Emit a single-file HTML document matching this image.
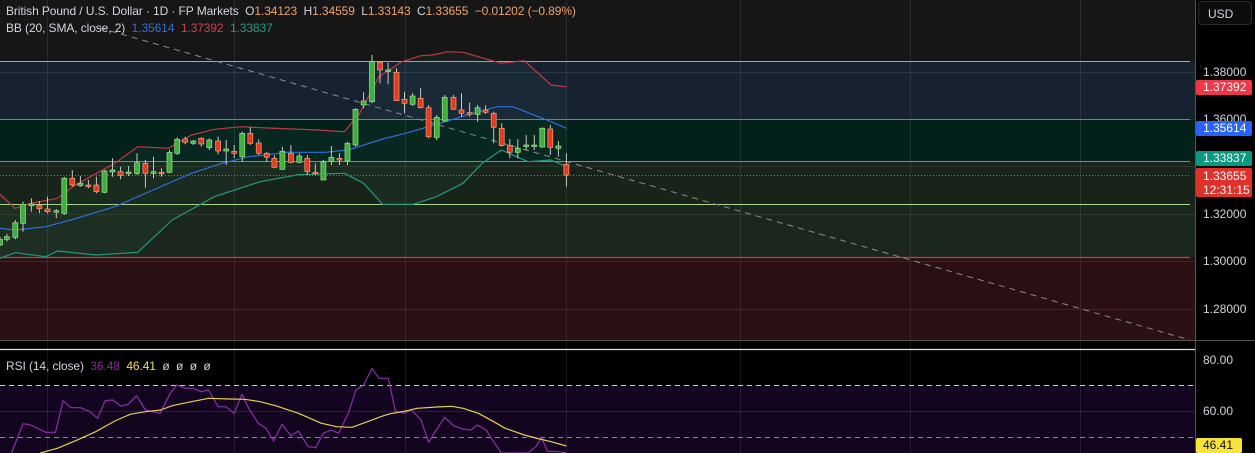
<!DOCTYPE html>
<html><head><meta charset="utf-8"><style>
html,body{margin:0;padding:0;background:#000;width:1255px;height:453px;overflow:hidden;font-family:"Liberation Sans",sans-serif;}
#wrap{position:relative;width:1255px;height:453px;}
svg{position:absolute;left:0;top:0;}
.t{position:absolute;font-size:12px;color:#d1d4dc;white-space:nowrap;letter-spacing:-0.1px}
.o{color:#f0a36b}
.lab{position:absolute;left:1203px;font-size:12px;color:#d1d4dc;}
.tag{position:absolute;left:1196px;width:56px;height:15px;font-size:12px;color:#fff;line-height:15px;padding-left:7px;box-sizing:border-box;border-radius:2px;}
</style></head><body><div id="wrap">
<svg id="s" width="1255" height="453" xmlns="http://www.w3.org/2000/svg"></svg>
<div class="t" style="left:6px;top:4px">British Pound / U.S. Dollar · 1D · FP Markets &nbsp;O<span class="o">1.34123</span> &nbsp;H<span class="o">1.34559</span> &nbsp;L<span class="o">1.33143</span> &nbsp;C<span class="o">1.33655</span> &nbsp;<span class="o">−0.01202 (−0.89%)</span></div>
<div class="t" style="left:6px;top:21px">BB (20, SMA, close, 2) &nbsp;<span style="color:#2f6fe0">1.35614</span> &nbsp;<span style="color:#d0404e">1.37392</span> &nbsp;<span style="color:#1d9e80">1.33837</span></div>
<div class="t" style="left:6px;top:359px">RSI (14, close) &nbsp;<span style="color:#8a2a9e">36.48</span> &nbsp;<span style="color:#f2e04a">46.41</span> &nbsp;ø &nbsp;ø &nbsp;ø &nbsp;ø</div>
<div style="position:absolute;left:1198px;top:1px;width:54px;height:24px;border:1px solid #2a2a2a;border-radius:4px;background:#0c0c0c;color:#d1d4dc;font-size:12px;line-height:24px;box-sizing:border-box;padding-left:9px">USD</div>
<div class="lab" style="top:65px">1.38000</div>
<div class="lab" style="top:112px">1.36000</div>
<div class="lab" style="top:207px">1.32000</div>
<div class="lab" style="top:254px">1.30000</div>
<div class="lab" style="top:302px">1.28000</div>
<div class="lab" style="top:353px">80.00</div>
<div class="lab" style="top:404px">60.00</div>
<div class="tag" style="top:80px;background:#f23645">1.37392</div>
<div class="tag" style="top:121px;background:#2962ff">1.35614</div>
<div class="tag" style="top:151px;background:#089981">1.33837</div>
<div class="tag" style="top:168px;height:29px;background:#e0302a;line-height:14px;padding-top:1px">1.33655<br>12:31:15</div>
<div class="tag" style="top:438px;width:46px;background:#f7e33b;color:#111">46.41</div>
</div>
<script>
var s=document.getElementById('s'),h='';
function R(x,y,w,hh,f){h+='<rect x="'+x+'" y="'+y+'" width="'+w+'" height="'+hh+'" fill="'+f+'"/>';}
function L(x1,y1,x2,y2,c,w,d){h+='<line x1="'+x1+'" y1="'+y1+'" x2="'+x2+'" y2="'+y2+'" stroke="'+c+'" stroke-width="'+(w||1)+'"'+(d?' stroke-dasharray="'+d+'"':'')+'/>';}
var SX=2.613;
function P(a,oy){return a.map(function(p){return (p[0]/SX).toFixed(1)+','+(p[1]/3+oy).toFixed(1)}).join(' ');}
function PL(a,oy,c,w){h+='<polyline points="'+P(a,oy)+'" fill="none" stroke="'+c+'" stroke-width="'+(w||1.2)+'" stroke-linejoin="round"/>';}
// main pane zones
R(0,0,1195,340,'#161616');
R(0,61,1195,58,'#172231');
R(0,119,1195,42,'#04201a');
R(0,161,1195,43,'#18241a');
R(0,204,1195,53,'#1b271c');
R(0,257,1195,83,'#2a1012');
// grid
[72,119,166,214,261,309].forEach(function(y){L(0,y+.5,1195,y+.5,'rgba(255,255,255,0.09)');});
[47,234,405,566,740,910,1080].forEach(function(x){L(x+.5,0,x+.5,453,'rgba(255,255,255,0.09)');});
L(0,61.5,1190,61.5,'#7fb2e0');
L(0,119.5,1190,119.5,'#3f9a8c');
L(0,161.5,1190,161.5,'#5caa5c');
L(0,204.5,1190,204.5,'#a8d890');
L(0,257.5,1190,257.5,'#d03a3a',1.2);
L(0,175.5,1190,175.5,'#d0602a',1,'1 2');
L(100,28,1190,340,'#8a8a8a',1,'6 5');
// BB
var up=[[0,463],[40,505],[80,490],[150,475],[190,440],[260,395],[300,370],[360,320],[440,325],[500,285],[560,268],[630,260],[700,264],[830,270],[900,275],[940,220],[990,110],[1050,65],[1100,47],[1130,45],[1170,35],[1210,37],[1310,70],[1370,62],[1440,135],[1480,140]];
var mid=[[0,565],[40,570],[120,560],[200,535],[300,500],[400,450],[500,400],[580,370],[650,350],[750,337],[850,337],[910,330],[1000,297],[1060,280],[1150,250],[1220,225],[1300,200],[1340,200],[1440,245],[1480,265]];
var lo=[[0,655],[40,638],[120,650],[150,633],[250,645],[360,637],[450,540],[560,470],[680,425],[780,404],[900,400],[950,430],[1000,493],[1080,493],[1140,470],[1210,430],[1260,370],[1310,330],[1380,365],[1440,360],[1480,380]];
h+='<polygon points="'+P(up,40)+' '+P(lo.slice().reverse(),40)+'" fill="rgba(60,140,110,0.07)"/>';
PL(up,40,'#c03848');PL(mid,40,'#2f6fd8');PL(lo,40,'#1f9a80');
// candles [x,top,bot,wt,wb,g]
var c=[[0,598,615,590,618,1],[18,590,598,582,605,1],[40,548,592,540,598,1],[60,493,550,485,575,1],[82,492,497,475,515,1],[103,495,506,483,520,0],[124,507,515,470,520,0],[147,512,514,507,535,1],[168,415,520,410,525,1],[189,415,435,390,440,0],[210,430,437,408,440,1],[231,435,437,420,445,0],[252,435,455,410,460,0],[273,393,457,390,460,1],[294,390,396,355,410,1],[315,395,406,380,418,0],[336,396,401,378,408,1],[358,368,400,340,405,1],[380,370,400,360,443,0],[401,395,400,350,415,1],[422,397,401,385,410,0],[443,337,397,330,400,1],[463,298,340,292,345,1],[484,297,307,290,313,0],[505,303,310,300,315,1],[526,295,312,292,320,0],[547,300,323,295,330,1],[570,303,333,290,343,0],[591,327,333,300,375,1],[612,334,340,315,355,0],[633,280,350,275,365,1],[654,280,310,262,315,0],[676,309,340,298,345,0],[697,340,352,335,365,0],[717,355,382,345,385,0],[738,334,388,320,390,1],[760,340,367,315,370,0],[782,348,367,340,370,1],[803,355,395,345,405,0],[824,397,399,370,405,0],[845,365,420,360,420,1],[866,352,365,318,375,1],[887,355,360,340,375,0],[908,310,363,305,375,1],[929,208,315,205,320,1],[950,183,195,157,205,1],[972,65,185,45,190,1],[993,67,90,65,130,0],[1014,90,94,68,133,1],[1036,97,182,85,183,0],[1057,178,190,155,220,0],[1078,168,193,160,198,1],[1099,175,203,145,205,0],[1120,203,290,195,295,0],[1141,232,292,225,300,1],[1162,172,243,165,245,1],[1185,172,208,165,210,0],[1206,210,220,160,230,0],[1227,218,222,188,230,0],[1248,203,223,195,245,1],[1269,210,217,196,222,0],[1290,220,262,215,310,0],[1311,265,317,250,320,0],[1332,316,337,297,355,0],[1353,325,337,298,355,1],[1375,315,318,285,330,1],[1396,315,318,285,330,1],[1417,265,321,262,323,1],[1438,267,322,255,345,0],[1459,318,325,303,350,1],[1480,373,405,340,440,0]];
c.forEach(function(k){var x=k[0]/SX,t=k[1]/3+40,b=k[2]/3+40,wt=k[3]/3+40,wb=k[4]/3+40;
var f=k[5]?'#3fae3f':'#e23b22',st=k[5]?'#9ce08a':'#f4a07a';
L(x.toFixed(1),wt.toFixed(1),x.toFixed(1),wb.toFixed(1),'#c8c8c8',1);
var hh=Math.max(b-t,1.5);h+='<rect x="'+(x-2.5).toFixed(1)+'" y="'+t.toFixed(1)+'" width="5" height="'+hh.toFixed(1)+'" fill="'+f+'" stroke="'+st+'" stroke-width="0.7"/>';});
// separator / RSI pane
R(0,340,1195,113,'#000');
L(0,340.5,1195,340.5,'#555');
L(0,349.5,1195,349.5,'#e0e0e0',1.2);
R(0,385,1195,68,'#13051f');
[47,234,405,566,740,910,1080].forEach(function(x){L(x+.5,341,x+.5,453,'rgba(255,255,255,0.09)');});
L(0,411.5,1195,411.5,'rgba(255,255,255,0.1)');
L(0,385.5,1195,385.5,'#cfcfcf',1,'5 4');
L(0,437.5,1195,437.5,'#8a8a8a',1,'5 4');
var pr=[[30,354],[60,266],[80,270],[120,292],[145,292],[165,197],[185,218],[210,218],[235,230],[255,250],[275,197],[295,195],[315,213],[335,208],[357,182],[380,225],[398,230],[418,235],[445,175],[462,150],[485,160],[505,160],[525,170],[545,165],[570,215],[590,215],[612,235],[632,178],[650,220],[675,265],[695,280],[715,318],[737,268],[760,302],[780,288],[805,335],[825,338],[845,295],[865,285],[885,295],[910,235],[930,165],[950,150],[972,100],[990,130],[1015,130],[1033,228],[1055,235],[1075,225],[1100,255],[1120,322],[1140,285],[1162,247],[1185,272],[1210,282],[1230,285],[1248,270],[1270,285],[1290,320],[1310,354],[1380,354],[1400,335],[1415,308],[1430,348],[1460,350],[1480,354]];
var yl=[[105,354],[150,340],[200,316],[250,290],[300,258],[340,238],[380,230],[420,225],[450,212],[500,200],[545,190],[600,192],[640,193],[680,200],[720,212],[780,235],[840,265],[880,275],[920,277],[960,260],[1000,243],[1020,236],[1060,228],[1090,220],[1140,216],[1180,214],[1210,220],[1250,235],[1290,260],[1320,280],[1370,300],[1410,312],[1440,320],[1480,333]];
PL(pr,335,'#8c2fa8',1.2);PL(yl,335,'#e6cf4a',1.2);
// axis
R(1196,0,59,453,'#000');
L(1195.5,0,1195.5,453,'#555');
L(1195,340.5,1255,340.5,'#555');
s.innerHTML=h;
</script>
</body></html>
